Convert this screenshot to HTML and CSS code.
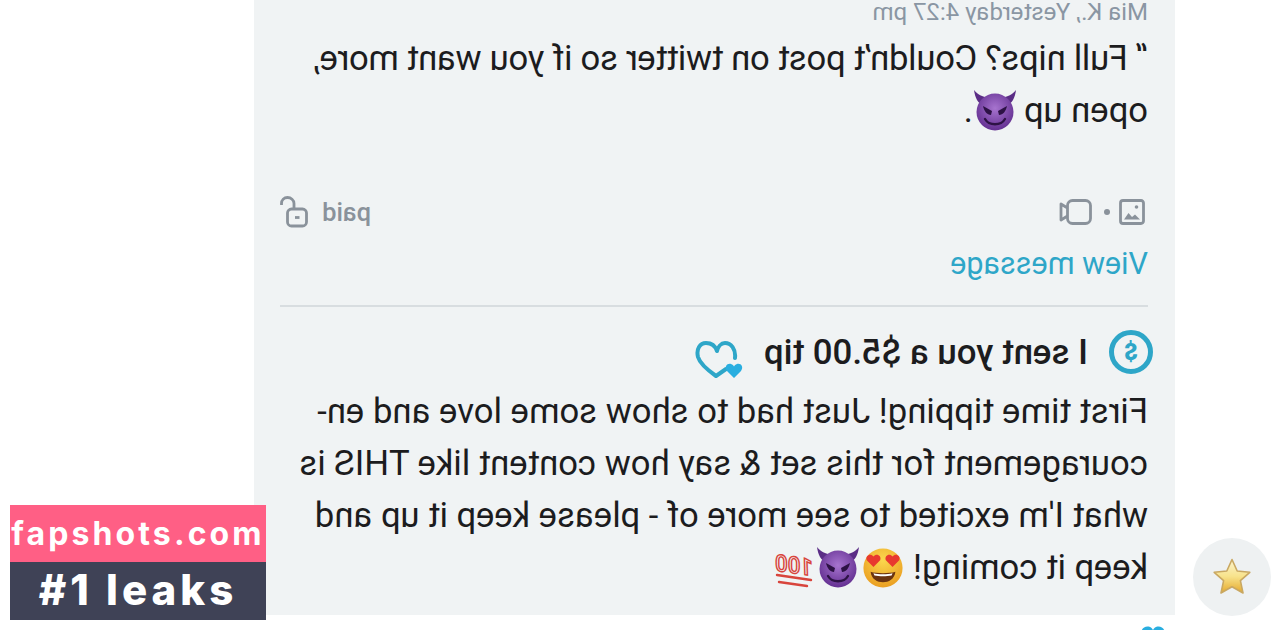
FILE: index.html
```html
<!DOCTYPE html>
<html lang="en">
<head>
    <meta charset="UTF-8">
    <title>Messages</title>
    <link rel="stylesheet" href="styles.css">
</head>
<body>
    <div class="shot">
        <div class="rail">
            <div class="star-btn">
                <svg width="42" height="42" viewBox="0 0 42 42">
                    <defs>
                        <linearGradient id="star-fill" x1="0" y1="0" x2="0" y2="1">
                            <stop offset="0" stop-color="#fbf3cf"/>
                            <stop offset="0.5" stop-color="#f8e38c"/>
                            <stop offset="1" stop-color="#e5a92c"/>
                        </linearGradient>
                    </defs>
                    <path d="M21 3.5L26.2 15L38.8 16.3L29.4 24.6L32 37L21 30.7L10 37L12.6 24.6L3.2 16.3L15.8 15Z" fill="url(#star-fill)" stroke="#c9a862" stroke-width="1.6" stroke-linejoin="round"/>
                </svg>
            </div>
        </div>
        <div class="main-col">
            <div class="card">
                <div class="meta">Mia K., Yesterday 4:27 pm</div>
                <p class="msg"><span class="msg-first">“ Full nips? Couldn’t post on twitter so if you want more,</span><br>open up
                    <svg class="emoji" width="46" height="44" viewBox="0 0 46 44">
                        <use href="#devil"/>
                    </svg>.</p>

                <div class="media-row">
                    <div class="media-icons">
                        <svg class="icon-image" width="26" height="26" viewBox="0 0 26 26" fill="none" stroke="#8a929b" stroke-width="2.8">
                            <rect x="1.500" y="1.500" width="23" height="23" rx="2.500"/>
                            <circle cx="8.500" cy="8" r="1.800" fill="#8a929b" stroke="none"/>
                            <path d="M5 20.500L10 15.500L13 18L16.500 14L21 20.500Z" fill="#8a929b" stroke="none"/>
                        </svg>
                        <span class="dot"></span>
                        <svg width="33" height="26" viewBox="0 0 33 26" fill="none" stroke="#8a929b" stroke-width="2.8" stroke-linejoin="round">
                            <rect x="1.500" y="1.500" width="23" height="23" rx="5"/>
                            <path d="M24.500 9L31 5V21L24.500 17"/>
                        </svg>
                    </div>
                    <div class="paid">
                        <span>paid</span>
                        <svg width="28" height="32" viewBox="0 0 28 32" fill="none" stroke="#8a929b" stroke-width="2.800">
                            <rect x="1.500" y="13" width="19" height="17" rx="4"/>
                            <path d="M14 13V7.500C14 4 17 1.500 20.500 1.500C24 1.500 26.500 4 26.500 7.500V9"/>
                            <path d="M8.500 21.500H13"/>
                        </svg>
                    </div>
                </div>

                <a class="view-link">View message</a>
                <div class="divider"></div>

                <div class="tip-row">
                    <div class="coin"><span>$</span></div>
                    <span class="tip-text">I sent you a $5.00 tip</span>
                    <svg class="tip-heart" width="50" height="50" viewBox="0 0 50 50" fill="none">
                        <path d="M10 30C9 21 14 15 20 15C24 15 27 19 28 23C30 17 35 15 39 15C45 15 49 21 47 29C45 36 36 43 29 48L19 41" stroke="#2ea6c8" stroke-width="4" stroke-linecap="round" stroke-linejoin="round"/>
                        <path d="M11 50L4 43C1 39 4 35 8 36C9.500 36.500 10.500 37.500 11 38.500C11.500 37.500 12.500 36.500 14 36C18 35 21 39 18 43Z" fill="#29aee0"/>
                    </svg>
                </div>
                <p class="msg tip-msg">First time tipping! Just had to show some love and en-<br>couragement for this set &amp; say how content like THIS is<br>what I'm excited to see more of - please keep it up and<br>keep it coming!
                    <span class="emoji-run">
                        <svg width="44" height="42" viewBox="0 0 46 44"><use href="#hearteyes"/></svg>
                        <svg width="46" height="44" viewBox="0 0 46 44"><use href="#devil"/></svg>
                        <svg width="44" height="42" viewBox="0 0 44 42">
                            <text class="hundred" x="2" y="27" transform="rotate(-8 22 21)">100</text>
                            <path d="M4 34L38 29M8 40L36 36" stroke="#d8443c" stroke-width="2.4" fill="none" stroke-linecap="round"/>
                        </svg>
                    </span>
                </p>
            </div>
            <div class="below">
                <svg width="26" height="22" viewBox="0 0 30 24"><path d="M15 24L3 11C-1 5 4 -1 10 0C12.500 0.500 14 2 15 4C16 2 17.500 0.500 20 0C26 -1 31 5 27 11Z" fill="#29aee0"/></svg>
            </div>
        </div>
    </div>

    <div class="watermark">
        <div class="wm-top">fapshots.com</div>
        <div class="wm-bottom">#1 leaks</div>
    </div>

    <!-- shared emoji shapes -->
    <svg class="defs" width="0" height="0">
        <defs>
            <radialGradient id="devil-face" cx="0.5" cy="0.4" r="0.65">
                <stop offset="0" stop-color="#a774cf"/>
                <stop offset="1" stop-color="#5e2a8c"/>
            </radialGradient>
            <radialGradient id="yellow-face" cx="0.5" cy="0.3" r="0.75">
                <stop offset="0" stop-color="#fbd84e"/>
                <stop offset="1" stop-color="#e99a1e"/>
            </radialGradient>
            <g id="devil">
                <path d="M2 2C3 10 6 15 11 18L17 10C11 9 6 7 2 2Z" fill="#5b2d86"/>
                <path d="M44 2C43 10 40 15 35 18L29 10C35 9 40 7 44 2Z" fill="#5b2d86"/>
                <circle cx="23" cy="24" r="18.500" fill="url(#devil-face)"/>
                <path d="M11 18L20 23L19 27C15 27 12 23 11 18Z" fill="#2d1245"/>
                <path d="M35 18L26 23L27 27C31 27 34 23 35 18Z" fill="#2d1245"/>
                <path d="M13 31C17 38 29 38 33 31" stroke="#2d1245" stroke-width="2.400" fill="none" stroke-linecap="round"/>
            </g>
            <g id="hearteyes">
                <circle cx="23" cy="23" r="20.500" fill="url(#yellow-face)"/>
                <path d="M13 22L6 15C4 10 10 7 13 11C16 7 22 10 20 15Z" fill="#e8392f"/>
                <path d="M33 22L26 15C24 10 30 7 33 11C36 7 42 10 40 15Z" fill="#e8392f"/>
                <path d="M10 27C16 29 30 29 36 27C35 35 29 38 23 38C17 38 11 35 10 27Z" fill="#6b3410"/>
                <path d="M13 28.500C18 30 28 30 33 28.500L32 31C27 32 19 32 14 31Z" fill="#fff"/>
            </g>
        </defs>
    </svg>
</body>
</html>
```

FILE: styles.css
```css
* {
    margin: 0;
    padding: 0;
    box-sizing: border-box;
}

html, body {
    width: 1284px;
    height: 630px;
    overflow: hidden;
    background: white;
}

body {
    font-family: Roboto, "Liberation Sans", sans-serif;
    color: #1c1c1e;
    position: relative;
}

/* the whole capture is flipped left to right */
.shot {
    display: flex;
    width: 1284px;
    height: 630px;
    transform: scaleX(-1);
}

.rail {
    width: 109px;
    flex-shrink: 0;
    display: flex;
    flex-direction: column;
    justify-content: flex-end;
    padding: 0 0 14px 13px;
}

.star-btn {
    width: 78px;
    height: 78px;
    border-radius: 50%;
    background: #eef1f2;
    display: flex;
    align-items: center;
    justify-content: center;
    transform: scaleX(-1);
}

.main-col {
    width: 921px;
    display: flex;
    flex-direction: column;
}

.card {
    height: 615px;
    flex-shrink: 0;
    background: #f0f3f4;
    padding: 0 26px 23px 27px;
}

.meta {
    height: 24px;
    font-size: 24px;
    line-height: 24px;
    color: #8a96a3;
}

.msg {
    margin-top: 8px;
    font-size: 34.7px;
    line-height: 52px;
    white-space: nowrap;
}

.msg-first {
    letter-spacing: -0.27px;
}

.emoji {
    vertical-align: -10px;
    margin-left: -3px;
}

.media-row {
    display: flex;
    justify-content: space-between;
    align-items: center;
    height: 32px;
    margin-top: 60px;
}

.media-icons {
    display: flex;
    align-items: center;
    gap: 9px;
}

.icon-image {
    margin-left: 3px;
}

.media-icons .dot {
    margin-right: 3px;
}

.dot {
    width: 6px;
    height: 6px;
    border-radius: 50%;
    background: #8a929b;
}

.paid {
    display: flex;
    align-items: center;
    gap: 14px;
    font-size: 25.5px;
    font-weight: 500;
    color: #8a929b;
}

.view-link {
    display: block;
    height: 36px;
    margin-top: 18px;
    font-size: 30.5px;
    line-height: 36px;
    color: #2ea6c8;
}

.divider {
    height: 2px;
    margin-top: 23px;
    background: #d8dde0;
}

.tip-row {
    display: flex;
    align-items: center;
    height: 44px;
    margin-top: 23px;
    margin-left: -5px;
}

.coin {
    width: 44px;
    height: 44px;
    border-radius: 50%;
    border: 5px solid #2ea6c8;
    display: flex;
    align-items: center;
    justify-content: center;
    font-size: 24px;
    font-weight: 900;
    color: #2ea6c8;
}

.tip-text {
    margin-left: 21px;
    font-size: 34.8px;
    font-weight: 500;
}

.tip-heart {
    margin-left: 19px;
    margin-top: 2px;
}

.tip-msg {
    margin-top: 11px;
}

.emoji-run {
    display: inline-flex;
    align-items: center;
    vertical-align: -9px;
}

.hundred {
    font-family: Roboto, sans-serif;
    font-size: 23px;
    font-weight: 500;
    font-style: italic;
    fill: none;
    stroke: #d8443c;
    stroke-width: 1.4;
}

.below {
    padding-left: 9px;
    height: 15px;
    padding-top: 11px;
    overflow: hidden;
}

.watermark {
    position: absolute;
    left: 10px;
    top: 505px;
    width: 256px;
    color: white;
    font-family: Inter, "Open Sans", sans-serif;
    font-weight: 700;
    text-align: center;
}

.wm-top {
    height: 57px;
    background: #ff5f85;
    font-size: 32px;
    line-height: 57px;
    letter-spacing: 3.1px;
}

.wm-bottom {
    height: 58px;
    background: #3f4256;
    font-size: 42px;
    line-height: 56px;
    font-weight: 800;
    letter-spacing: 4px;
}

.defs {
    position: absolute;
}
```
